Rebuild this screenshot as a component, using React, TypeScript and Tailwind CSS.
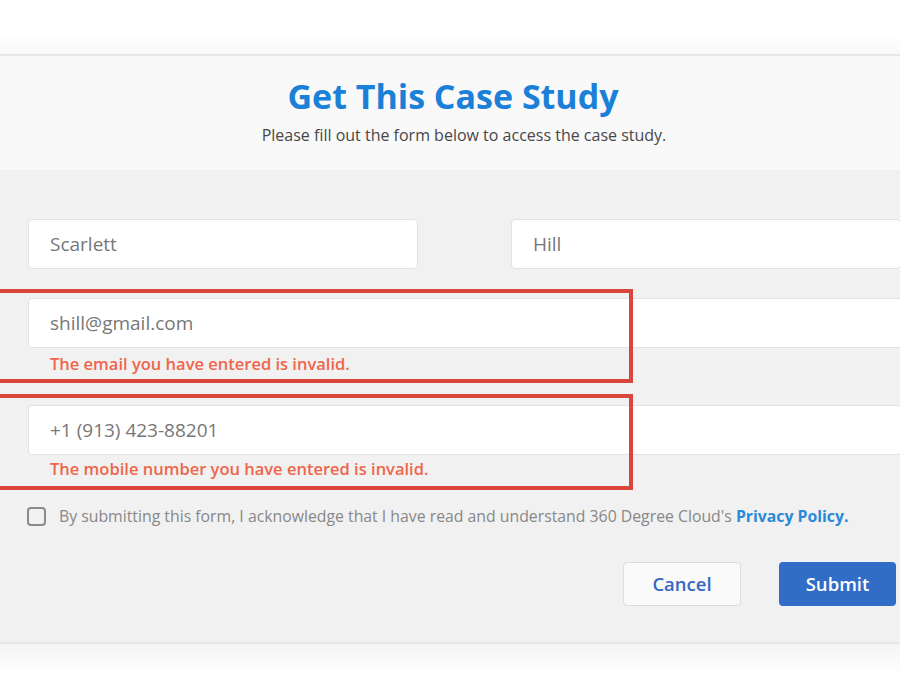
import React from 'react';

const font = { fontFamily: '"Open Sans", "Noto Sans", sans-serif' };

function Field({ value, className = '' }: { value: string; className?: string }) {
    return (
        <div
            className={`h-[50px] bg-white border border-[#e2e2e2] rounded-[4px] flex items-center pl-[21px] text-[19px] text-[#777] ${className}`}
        >
            {value}
        </div>
    );
}

function ErrorText({ children, className = '' }: { children: React.ReactNode; className?: string }) {
    return (
        <div className={`pl-[22px] h-[29px] flex items-center text-[16.5px] font-semibold text-[#ef654a] ${className}`}>
            {children}
        </div>
    );
}

export default function App() {
    return (
        <div className="w-[900px] h-[700px] bg-white overflow-hidden relative" style={font}>
            <div className="h-[35px]" />
            <div className="h-[19px] bg-gradient-to-b from-white to-[#f8f8f8]" />

            <div className="w-[906px] border-t-2 border-b-2 border-[#e6e6e6]">
                {/* header */}
                <div className="h-[114px] bg-[#f9f9f9] flex flex-col items-center pt-[18px]">
                    <h1 className="text-[34px] leading-[44px] font-bold text-[#1b80d8]">Get This Case Study</h1>
                    <p className="mt-[5px] ml-[22px] text-[16px] text-[#474747]">Please fill out the form below to access the case study.</p>
                </div>

                {/* body */}
                <div className="bg-[#f1f1f1] pl-[28px] pt-[49px] pb-[36px]">
                    <div className="grid grid-cols-[390px_390px] gap-x-[93px]">
                        <Field value="Scarlett" />
                        <Field value="Hill" />
                    </div>

                    <Field value="shill@gmail.com" className="mt-[29px] w-[900px]" />
                    <ErrorText className="pt-[2px] h-[31px]">The email you have entered is invalid.</ErrorText>

                    <Field value="+1 (913) 423-88201" className="mt-[26px] w-[900px]" />
                    <ErrorText>The mobile number you have entered is invalid.</ErrorText>

                    <div className="mt-[21px] flex items-center gap-[13px] -ml-[1px]">
                        <span className="w-[19px] h-[19px] rounded-[4px] border-2 border-[#8a8a8a] bg-transparent" />
                        <span className="text-[15.8px] text-[#888]">
                            By submitting this form, I acknowledge that I have read and understand 360 Degree Cloud's{' '}
                            <span className="font-bold text-[#2a8ad8]">Privacy Policy.</span>
                        </span>
                    </div>

                    <div className="mt-[33px] flex justify-end gap-[38px] pr-[10px]">
                        <button className="w-[118px] h-[44px] rounded-[4px] border border-[#dcdcdc] bg-[#fafafa] text-[18.5px] font-semibold text-[#3567c2]">
                            Cancel
                        </button>
                        <button className="w-[117px] h-[44px] rounded-[4px] bg-[#316cc6] text-[18.5px] font-semibold text-white">
                            Submit
                        </button>
                    </div>
                </div>
            </div>

            <div className="h-[30px] bg-gradient-to-b from-[#f4f4f4] to-white" />

            {/* annotation boxes */}
            <div className="absolute left-[-10px] top-[289px] w-[643px] h-[94px] border-[4px] border-[#d9463c]" />
            <div className="absolute left-[-10px] top-[394px] w-[643px] h-[96px] border-[4px] border-[#d9463c]" />
        </div>
    );
}
